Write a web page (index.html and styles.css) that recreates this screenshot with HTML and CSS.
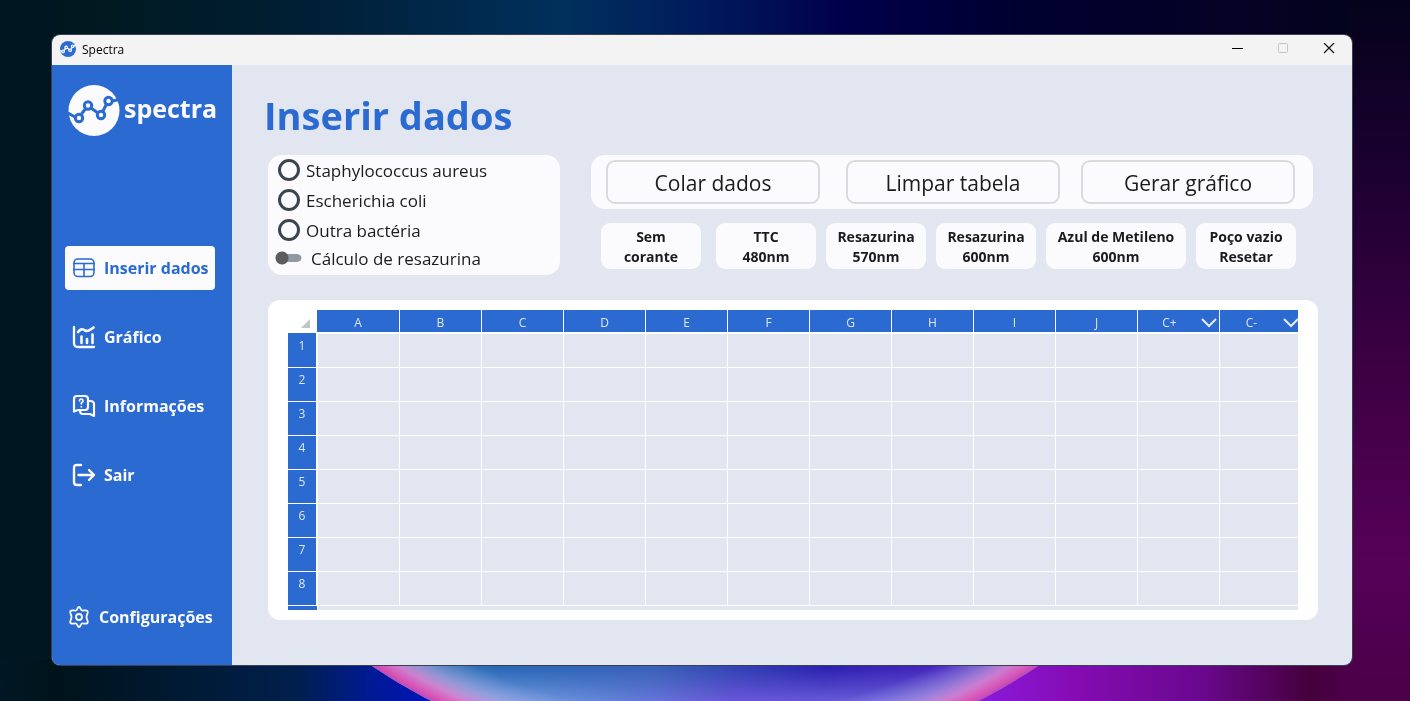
FILE: index.html
```html
<!DOCTYPE html>
<html lang="pt-BR">
<head>
<meta charset="utf-8">
<title>Spectra</title>
<link rel="stylesheet" href="styles.css">
</head>
<body>
<svg class="wallpaper" viewBox="0 0 1410 701" preserveAspectRatio="none" aria-hidden="true">
  <defs>
    <linearGradient id="top">
      <stop offset="0" stop-color="#001320"/><stop offset=".06" stop-color="#00191f"/><stop offset=".22" stop-color="#001f35"/><stop offset=".4" stop-color="#00305c"/>
      <stop offset=".5" stop-color="#001a5c"/><stop offset=".6" stop-color="#00004a"/><stop offset=".72" stop-color="#000030"/>
      <stop offset=".88" stop-color="#050224"/><stop offset="1" stop-color="#03031a"/>
    </linearGradient>
    <linearGradient id="bottom">
      <stop offset="0" stop-color="#001824"/><stop offset=".04" stop-color="#00131a"/><stop offset=".13" stop-color="#001a33"/><stop offset=".21" stop-color="#001f4c"/>
      <stop offset=".26" stop-color="#001a90"/><stop offset=".31" stop-color="#0014c0"/><stop offset=".7" stop-color="#8a18d8"/><stop offset=".76" stop-color="#850cb4"/>
      <stop offset=".85" stop-color="#6a0890"/><stop offset=".93" stop-color="#45003c"/><stop offset="1" stop-color="#5a0060"/>
    </linearGradient>
    <linearGradient id="right" x2="0" y2="1">
      <stop offset="0" stop-color="#04031a"/><stop offset=".25" stop-color="#1c0032"/><stop offset=".5" stop-color="#3a0040"/>
      <stop offset=".8" stop-color="#560058"/><stop offset="1" stop-color="#4a0048"/>
    </linearGradient>
    <linearGradient id="orb">
      <stop offset=".24" stop-color="#4a88b8"/><stop offset=".33" stop-color="#2a68b8"/><stop offset=".46" stop-color="#3a62b8"/>
      <stop offset=".6" stop-color="#2c22b0"/><stop offset=".7" stop-color="#4a28c0"/><stop offset=".8" stop-color="#7060d0"/>
    </linearGradient>
    <linearGradient id="glow" gradientUnits="userSpaceOnUse" x1="400" y1="0" x2="1000" y2="0">
      <stop offset="0" stop-color="#8cc0e8"/><stop offset=".35" stop-color="#6a88dc"/><stop offset=".55" stop-color="#7058dc"/><stop offset="1" stop-color="#7070dc"/>
    </linearGradient>
    <linearGradient id="fade" gradientUnits="userSpaceOnUse" x1="0" y1="668" x2="0" y2="701">
      <stop offset="0" stop-color="#000"/><stop offset="1" stop-color="#ddd"/>
    </linearGradient>
    <mask id="glow-mask"><rect y="660" width="1410" height="41" fill="url(#fade)"/></mask>
    <radialGradient id="rim">
      <stop offset=".915" stop-color="#a8b0e8" stop-opacity="0"/><stop offset=".95" stop-color="#c0a8e4" stop-opacity=".45"/>
      <stop offset=".975" stop-color="#d880d0" stop-opacity=".9"/><stop offset=".99" stop-color="#d858b8"/><stop offset="1" stop-color="#c048b8"/>
    </radialGradient>
  </defs>
  <rect width="1410" height="350" fill="url(#top)"/>
  <rect y="350" width="1410" height="351" fill="url(#bottom)"/>
  <rect width="56" height="660" fill="#001620"/>
  <rect x="1348" width="62" height="701" fill="url(#right)"/>
  <circle cx="705" cy="167" r="600" fill="url(#orb)" clip-path="inset(80% 0 0 0)"/>
  <circle cx="705" cy="167" r="600" fill="url(#glow)" mask="url(#glow-mask)"/>
  <circle cx="705" cy="167" r="600" fill="url(#rim)" clip-path="inset(80% 0 0 0)"/>
</svg>

<div class="window">
  <header class="titlebar">
    <svg class="app-icon" viewBox="0 0 52 52" aria-hidden="true">
      <circle cx="26" cy="26" r="26" fill="#2b6ad0"/>
      <g fill="none" stroke="#fff" stroke-width="4"><path d="M0 31L7 34M13 31L18 24M23 23L30 28M36 27L40 20M44 16L52 15"/><circle cx="10" cy="34" r="4"/><circle cx="20" cy="21" r="4"/><circle cx="33" cy="30" r="4"/><circle cx="41" cy="17" r="4"/></g>
    </svg>
    <span class="app-name">Spectra</span>
    <div class="controls">
      <button aria-label="Minimizar"><svg viewBox="0 0 12 12"><path d="M1 5.500H12" stroke="#000"/></svg></button>
      <button aria-label="Maximizar" disabled><svg viewBox="0 0 12 12"><rect x="1.500" y=".5" width="9" height="9" rx="1" fill="none" stroke="#c4c4c4"/></svg></button>
      <button aria-label="Fechar"><svg viewBox="0 0 12 12"><path d="M1 0L11 10M11 0L1 10" stroke="#111" stroke-width="1.200"/></svg></button>
    </div>
  </header>

  <div class="body">
    <aside class="sidebar">
      <div class="brand">
        <svg class="logo" viewBox="0 0 52 52" aria-hidden="true">
          <circle cx="26" cy="25.500" r="25.500" fill="#fbfbfe"/>
          <g fill="none" stroke="#2b6ad0" stroke-width="3"><path d="M0 28L7 32M13.500 29L18 23M23 23L30 28M35 26L38.500 19M44 16L52 14.500"/><circle cx="11" cy="33" r="3.700"/><circle cx="20" cy="20.500" r="3.700"/><circle cx="33" cy="30" r="3.700"/><circle cx="40.500" cy="16" r="3.700"/></g>
        </svg>
        <span class="brand-name">spectra</span>
      </div>
      <nav class="nav">
        <a class="item active" href="#dados">
          <svg viewBox="0 0 22 22"><rect x="1" y="2" width="20" height="17.500" rx="4"/><path d="M1 6.500H21M1 12.500H21M11 7V19"/></svg>Inserir dados</a>
        <a class="item" href="#grafico">
          <svg viewBox="0 0 22 22"><path d="M1 1V17Q1 21 5 21H21" stroke-width="2.300"/><path d="M5 6Q8.500 1.500 12 4.500Q15 6 20.500 1.500" stroke-width="2.600"/><path d="M8.500 10.500V17M14 13V17M19.500 8.500V17" stroke-width="2.600"/></svg>Gráfico</a>
        <a class="item" href="#info">
          <svg viewBox="0 0 22 22"><path d="M4 1H12Q15 1 15 4V12Q15 15 12 15H5L1 16.500V4Q1 1 4 1Z" stroke-width="2.200"/><path d="M15 6H17Q21 6 21 9V21L17 19H10Q7 19 7 16" stroke-width="2.200"/><path d="M6.500 6Q6.500 4 8.200 4Q10 4 10 6Q10 7 8.300 8V9" stroke-width="1.600"/><path d="M8.300 11.500V12" stroke-width="1.600"/></svg>Informações</a>
        <a class="item" href="#sair">
          <svg viewBox="0 0 22 22"><path d="M8 1H4Q1 1 1 4V18Q1 21 4 21H8M5.500 11H21M16 6L21 11L16 16" stroke-width="2.400"/></svg>Sair</a>
      </nav>
      <a class="item settings" href="#config">
        <svg viewBox="0 0 22 22"><path d="M11 1C12.500 1 12.500 4 14 4.500C15.500 5 18 3.500 19.500 5C20.800 6.800 18.500 8.500 18.500 11C18.500 13.500 20.800 15.200 19.500 17C18 18.500 15.500 17 14 17.500C12.500 18 12.500 21 11 21C9.500 21 9.500 18 8 17.500C6.500 17 4 18.500 2.500 17C1.200 15.200 3.500 13.500 3.500 11C3.500 8.500 1.200 6.800 2.500 5C4 3.500 6.500 5 8 4.500C9.500 4 9.500 1 11 1Z" stroke-width="1.800"/><circle cx="11" cy="11" r="3"  stroke-width="1.800"/></svg>Configurações</a>
    </aside>

    <main class="main">
      <h1>Inserir dados</h1>
      <div class="options">
        <form class="card species">
          <label class="choice"><input type="radio" name="especie">Staphylococcus aureus</label>
          <label class="choice"><input type="radio" name="especie">Escherichia coli</label>
          <label class="choice"><input type="radio" name="especie">Outra bactéria</label>
          <label class="choice toggle"><input type="checkbox" role="switch">Cálculo de resazurina</label>
        </form>
        <div class="tools">
          <div class="card actions">
            <button>Colar dados</button>
            <button>Limpar tabela</button>
            <button>Gerar gráfico</button>
          </div>
          <div class="dyes">
            <button>Sem<br>corante</button>
            <button>TTC<br>480nm</button>
            <button>Resazurina<br>570nm</button>
            <button>Resazurina<br>600nm</button>
            <button class="wide">Azul de Metileno<br>600nm</button>
            <button>Poço vazio<br>Resetar</button>
          </div>
        </div>
      </div>
      <section class="sheet">
        <div class="sheet-view">
          <table>
            <colgroup><col class="c-index"><col class="c-first"><col span="11" class="c-data"></colgroup>
            <thead><tr>
              <td class="corner"><svg viewBox="0 0 9 9"><path d="M9 0V9H0Z" fill="#c4c4c4"/></svg></td>
              <th>A</th><th>B</th><th>C</th><th>D</th><th>E</th><th>F</th><th>G</th><th>H</th><th>I</th><th>J</th>
              <th><div class="menu-head"><span>C+</span><button aria-label="Opções de C+"><svg viewBox="0 0 16 10"><path d="M1 1L8 8L15 1"/></svg></button></div></th>
              <th><div class="menu-head"><span>C-</span><button aria-label="Opções de C-"><svg viewBox="0 0 16 10"><path d="M1 1L8 8L15 1"/></svg></button></div></th>
            </tr></thead>
            <tbody>
              <tr><th>1</th><td></td><td></td><td></td><td></td><td></td><td></td><td></td><td></td><td></td><td></td><td></td><td></td></tr>
              <tr><th>2</th><td></td><td></td><td></td><td></td><td></td><td></td><td></td><td></td><td></td><td></td><td></td><td></td></tr>
              <tr><th>3</th><td></td><td></td><td></td><td></td><td></td><td></td><td></td><td></td><td></td><td></td><td></td><td></td></tr>
              <tr><th>4</th><td></td><td></td><td></td><td></td><td></td><td></td><td></td><td></td><td></td><td></td><td></td><td></td></tr>
              <tr><th>5</th><td></td><td></td><td></td><td></td><td></td><td></td><td></td><td></td><td></td><td></td><td></td><td></td></tr>
              <tr><th>6</th><td></td><td></td><td></td><td></td><td></td><td></td><td></td><td></td><td></td><td></td><td></td><td></td></tr>
              <tr><th>7</th><td></td><td></td><td></td><td></td><td></td><td></td><td></td><td></td><td></td><td></td><td></td><td></td></tr>
              <tr><th>8</th><td></td><td></td><td></td><td></td><td></td><td></td><td></td><td></td><td></td><td></td><td></td><td></td></tr>
              <tr class="partial"><th></th><td colspan="12"></td></tr>
            </tbody>
          </table>
        </div>
      </section>
    </main>
  </div>
</div>
</body>
</html>
```

FILE: styles.css
```css
* { box-sizing: border-box; }

body {
  margin: 0;
  min-height: 100vh;
  display: flex;
  padding: 35px 58px 36px 52px;
  background: #001420;
  color: #1b1b1f;
  font-family: "Open Sans", "Noto Sans", sans-serif;
}

button { font: inherit; color: inherit; border: 0; padding: 0; background: none; }

.wallpaper {
  position: fixed;
  inset: 0;
  width: 100%;
  height: 100%;
  z-index: -1;
}

.window {
  flex: 1;
  min-width: 0;
  display: flex;
  flex-direction: column;
  border-radius: 8px;
  overflow: hidden;
  box-shadow: 0 0 0 1px #3a4050;
}

/* Title bar */
.titlebar {
  display: flex;
  align-items: center;
  height: 30px;
  padding: 0 0 2px 8px;
  background: #f3f3f3;
  color: #000;
  font-size: 12px;
}
.app-icon { width: 16px; height: 16px; margin-right: 6px; }
.controls { display: flex; margin-left: auto; height: 100%; }
.controls button { display: grid; place-items: center; width: 46px; }
.controls svg { width: 12px; height: 12px; display: block; }

.body { flex: 1; display: flex; background: #e2e6f1; }

/* Sidebar */
.sidebar {
  flex: none;
  width: 180px;
  display: flex;
  flex-direction: column;
  padding: 20px 17px 26px 13px;
  background: #2b6ad0;
}
.brand { display: flex; align-items: center; gap: 4px; padding-left: 3px; }
.logo { flex: none; width: 52px; height: 52px; }
.brand-name {
  color: #fbfbfe;
  font-size: 25px;
  font-weight: 700;
  line-height: 36px;
  padding-bottom: 6px;
}
.nav { display: flex; flex-direction: column; gap: 25px; margin-top: 109px; }
.item {
  display: flex;
  align-items: center;
  gap: 9px;
  height: 44px;
  padding-left: 8px;
  border-radius: 4px;
  color: #fbfbfe;
  font-size: 16px;
  font-weight: 700;
  text-decoration: none;
  white-space: nowrap;
}
.item svg {
  flex: none;
  width: 22px;
  height: 22px;
  overflow: visible;
  fill: none;
  stroke: currentColor;
  stroke-width: 1.6;
  stroke-linecap: round;
  stroke-linejoin: round;
}
.item.active { background: #fbfbfe; color: #2b6ad0; }
.settings { margin-top: auto; padding-left: 3px; }

/* Main area */
.main { flex: 1; min-width: 0; padding: 20px 34px 45px 36px; }
h1 {
  margin: 0 0 10px -4px;
  color: #2b6ad0;
  font-size: 38px;
  font-weight: 700;
  line-height: 60px;
}
.options { display: flex; gap: 31px; padding-right: 5px; }
.card { background: #fbfbfe; border-radius: 14px; }

.species { flex: none; width: 292px; height: 120px; padding-left: 10px; }
.choice {
  display: flex;
  align-items: center;
  gap: 6px;
  height: 30px;
  font-size: 17px;
}
.choice input { appearance: none; flex: none; margin: 0; }
.choice input[type="radio"] {
  width: 22px;
  height: 22px;
  border: 3px solid #3d454c;
  border-radius: 50%;
}
.choice input[type="radio"]:checked { background: #2b6ad0; }
.toggle { height: 26px; gap: 9px; margin-left: -3px; }
.toggle input {
  width: 27px;
  height: 14px;
  border-radius: 7px;
  background:
    radial-gradient(circle at 7px 7px, #5c5c5c 6px, transparent 7px),
    linear-gradient(#909aa2, #909aa2) 7px 3px / 16px 8px no-repeat,
    radial-gradient(circle at 23px 7px, #909aa2 3px, transparent 4px);
}

.tools { flex: 1; min-width: 0; }
.actions { display: flex; padding: 5px 18px 5px 15px; }
.actions button {
  flex: 1;
  height: 44px;
  padding-top: 2px;
  border: 2px solid #d9dadd;
  border-radius: 9px;
  font-size: 21px;
}
.actions button + button { margin-left: 26px; }
.actions button:last-child { margin-left: 21px; }

.dyes { display: flex; gap: 10px; margin-top: 14px; padding: 0 17px 0 10px; }
.dyes button {
  flex: 100 1 0;
  height: 46px;
  padding-top: 2px;
  border-radius: 9px;
  background: #fbfbfe;
  font-size: 14px;
  font-weight: 700;
  line-height: 20px;
  white-space: nowrap;
}
.dyes button:first-child { margin-right: 5px; }
.dyes .wide { flex-grow: 140; }

/* Spreadsheet */
.sheet {
  margin-top: 25px;
  padding: 10px 20px;
  border-radius: 12px;
  background: #fff;
}
.sheet-view { height: 300px; overflow: hidden; }
table {
  table-layout: fixed;
  width: 1014px;
  border-collapse: separate;
  border-spacing: 0;
  font-size: 12px;
  line-height: 16px;
}
.c-index { width: 29px; }
.c-first { width: 83px; }
.c-data { width: 82px; }
th, td { padding: 0; border: 0 solid #fff; border-width: 0 1px 1px 0; }
th { background: #2b6ad0; color: #e2e6f1; font-weight: 400; }
thead th { height: 23px; padding-top: 4px; }
.corner { padding: 5px 6px 0 0; }
.corner svg { display: block; width: 9px; height: 9px; margin-left: auto; }
tbody th { height: 34px; padding-top: 4px; vertical-align: top; }
tbody td { background: #e2e6f1; }
tbody td:nth-child(2) { border-left-width: 1px; }
tbody tr:first-child th { height: 35px; padding-top: 5px; }
tbody tr:first-child td { border-top-width: 1px; }
tbody .partial th { border-right-color: #2b6ad0; }
.menu-head { display: flex; align-items: center; }
.menu-head span { flex: 1; }
.menu-head button { width: 16px; height: 10px; margin-right: 2px; }
.menu-head svg { display: block; fill: none; stroke: #e8ecf5; stroke-width: 2; }
```
